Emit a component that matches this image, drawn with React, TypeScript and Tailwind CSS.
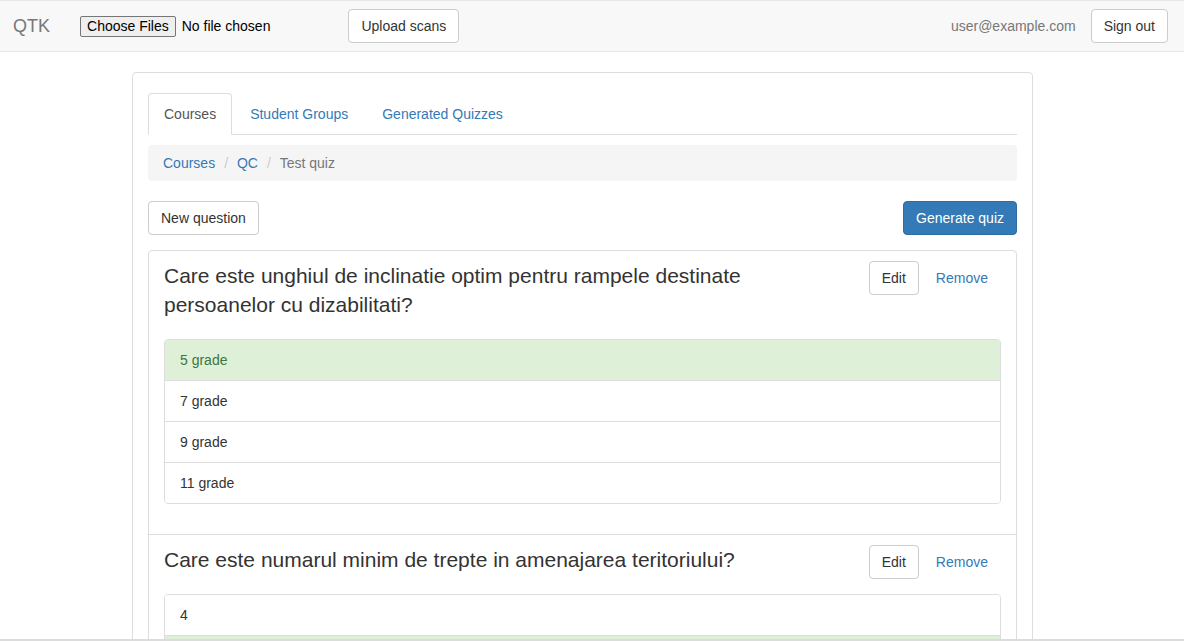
import React from "react";

interface Question {
  id: number;
  title: string;
  answers: { text: string; correct: boolean }[];
}

const questions: Question[] = [
  {
    id: 1,
    title: "Care este unghiul de inclinatie optim pentru rampele destinate persoanelor cu dizabilitati?",
    answers: [
      { text: "5 grade", correct: true },
      { text: "7 grade", correct: false },
      { text: "9 grade", correct: false },
      { text: "11 grade", correct: false },
    ],
  },
  {
    id: 2,
    title: "Care este numarul minim de trepte in amenajarea teritoriului?",
    answers: [
      { text: "4", correct: false },
      { text: "3", correct: true },
      { text: "2", correct: false },
      { text: "5", correct: false },
    ],
  },
];

const btnDefault =
  "inline-block rounded-[4px] border border-[#ccc] bg-white px-3 py-[6px] text-sm leading-5 text-[#333]";

function Navbar() {
  return (
    <nav className="flex h-[52px] items-center border-y border-[#e7e7e7] bg-[#f8f8f8]">
      <span className="pl-[13px] pr-[30px] text-[18px] leading-5 text-[#777]">QTK</span>
      <div className="flex items-center">
        <span className="rounded-[2px] border border-[#767676] bg-[#efefef] px-[6px] text-sm leading-[19px] text-black">
          Choose Files
        </span>
        <span className="ml-[6px] text-sm text-black">No file chosen</span>
      </div>
      <button className={`${btnDefault} ml-[78px]`}>Upload scans</button>
      <div className="ml-auto flex items-center pr-4">
        <span className="mr-[15px] text-sm text-[#777]">user@example.com</span>
        <button className={btnDefault}>Sign out</button>
      </div>
    </nav>
  );
}

function Tabs() {
  return (
    <ul className="flex border-b border-[#ddd]">
      <li className="-mb-px mr-[2px]">
        <span className="block rounded-t-[4px] border border-[#ddd] border-b-transparent bg-white px-[15px] py-[10px] leading-5 text-[#555]">
          Courses
        </span>
      </li>
      <li className="-mb-px mr-[2px]">
        <span className="block border border-transparent px-[15px] py-[10px] leading-5 text-[#337ab7]">
          Student Groups
        </span>
      </li>
      <li className="-mb-px mr-[2px]">
        <span className="block border border-transparent px-[15px] py-[10px] leading-5 text-[#337ab7]">
          Generated Quizzes
        </span>
      </li>
    </ul>
  );
}

function Breadcrumb() {
  return (
    <ol className="mt-[10px] flex gap-1 rounded-[4px] bg-[#f5f5f5] px-[15px] py-2 leading-5">
      <li className="text-[#337ab7]">Courses</li>
      <li className="flex">
        <span className="px-[5px] text-[#ccc]">/{"\u00a0"}</span>
        <span className="text-[#337ab7]">QC</span>
      </li>
      <li className="flex">
        <span className="px-[5px] text-[#ccc]">/{"\u00a0"}</span>
        <span className="text-[#777]">Test quiz</span>
      </li>
    </ol>
  );
}

function QuestionItem({ q, first }: { q: Question; first: boolean }) {
  return (
    <div className={`px-[15px] pb-[10px] pt-[10px] ${first ? "" : "border-t border-[#ddd]"}`}>
      <div className="float-right flex gap-1">
        <button className={btnDefault}>Edit</button>
        <button className="inline-block border border-transparent px-3 py-[6px] text-sm leading-5 text-[#337ab7]">
          Remove
        </button>
      </div>
      <h4 className="w-[660px] text-[21px] leading-[29px] text-[#333]">{q.title}</h4>
      <div className="mb-5 mt-5 overflow-hidden rounded-[4px] border border-[#ddd]">
        {q.answers.map((a, i) => (
          <div
            key={i}
            className={`px-[15px] py-[10px] leading-5 ${i > 0 ? "border-t border-[#ddd]" : ""} ${
              a.correct ? "bg-[#dff0d8] text-[#3c763d]" : "bg-white text-[#333]"
            }`}
          >
            {a.text}
          </div>
        ))}
      </div>
    </div>
  );
}

export default function App() {
  return (
    <div className="min-h-screen bg-white font-['Liberation_Sans',Arial,sans-serif] text-sm leading-5 text-[#333]">
      <Navbar />

      <main className="ml-[132px] mt-5 w-[901px] rounded-[4px] border border-[#ddd] px-[15px] pt-5">
        <Tabs />
        <Breadcrumb />

        <div className="mt-5 flex justify-between">
          <button className={btnDefault}>New question</button>
          <button className="inline-block rounded-[4px] border border-[#2e6da4] bg-[#337ab7] px-3 py-[6px] text-sm leading-5 text-white">
            Generate quiz
          </button>
        </div>

        <div className="mb-5 mt-[15px] rounded-[4px] border border-[#ddd]">
          {questions.map((q, i) => (
            <QuestionItem key={q.id} q={q} first={i === 0} />
          ))}
        </div>
      </main>

      <div className="fixed bottom-0 left-0 right-0 h-[2px] bg-[#dcdcdc]" />
    </div>
  );
}
